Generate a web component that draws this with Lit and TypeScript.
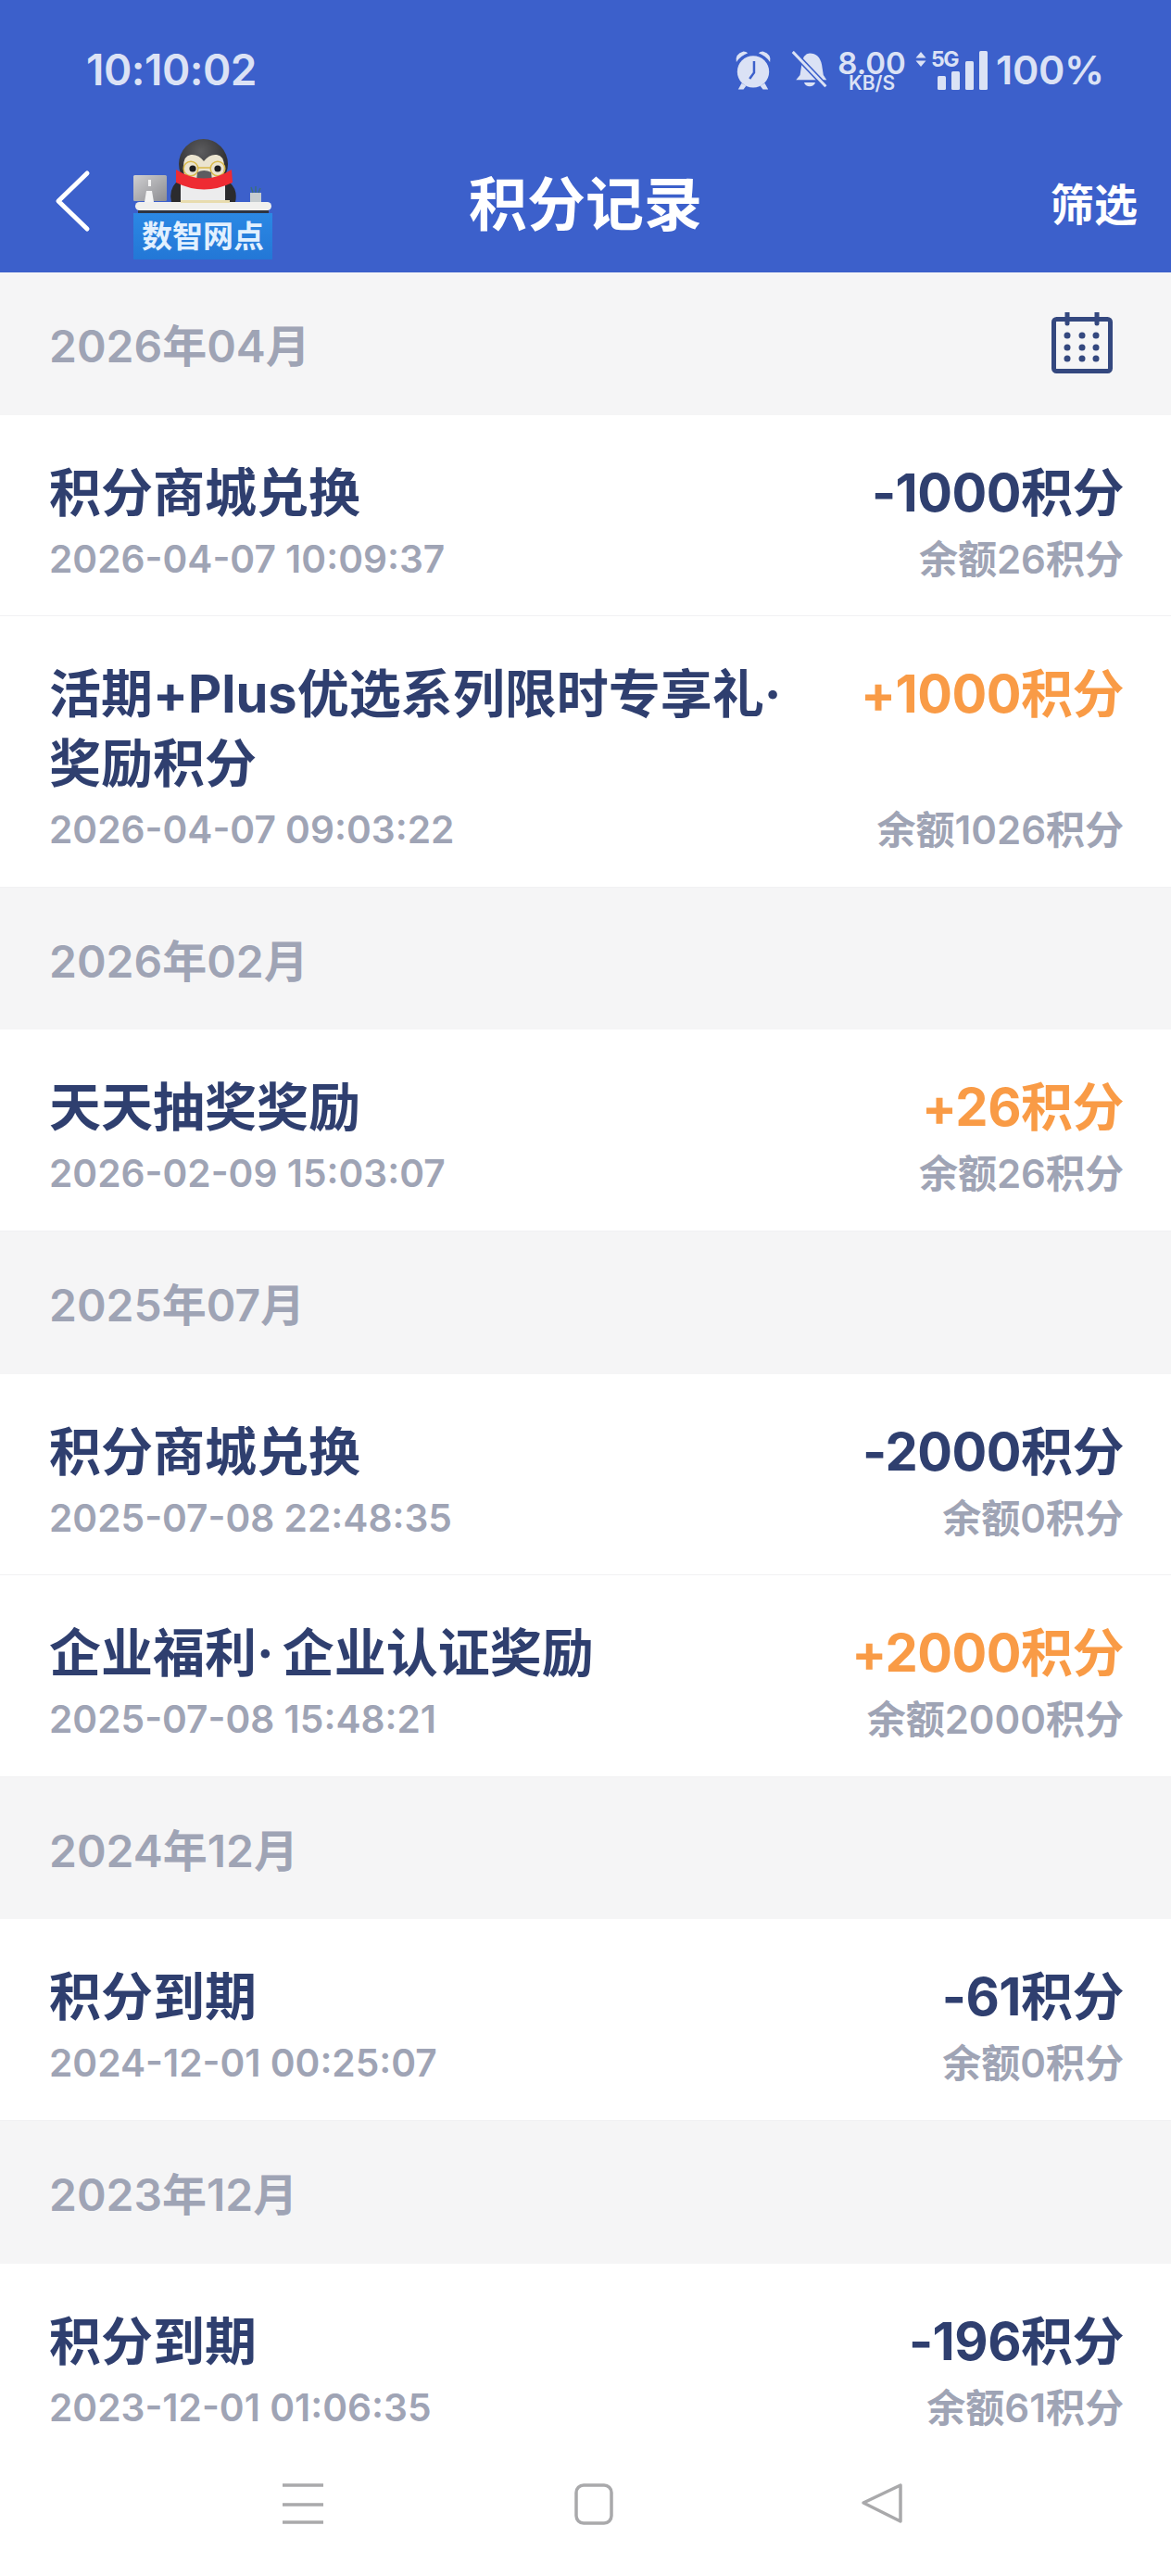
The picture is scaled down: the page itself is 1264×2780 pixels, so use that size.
import { LitElement, html, css, svg } from "lit";
import { customElement } from "lit/decorators.js";

type Row = { title: string; time: string; amount: string; balance: string; gain?: boolean };
type Section = { month: string; calendar?: boolean; rows: Row[] };

const sections: Section[] = [
  {
    month: "2026年04月",
    calendar: true,
    rows: [
      { title: "积分商城兑换", time: "2026-04-07 10:09:37", amount: "-1000积分", balance: "余额26积分" },
      { title: "活期+Plus优选系列限时专享礼·奖励积分", time: "2026-04-07 09:03:22", amount: "+1000积分", balance: "余额1026积分", gain: true },
    ],
  },
  {
    month: "2026年02月",
    rows: [{ title: "天天抽奖奖励", time: "2026-02-09 15:03:07", amount: "+26积分", balance: "余额26积分", gain: true }],
  },
  {
    month: "2025年07月",
    rows: [
      { title: "积分商城兑换", time: "2025-07-08 22:48:35", amount: "-2000积分", balance: "余额0积分" },
      { title: "企业福利·企业认证奖励", time: "2025-07-08 15:48:21", amount: "+2000积分", balance: "余额2000积分", gain: true },
    ],
  },
  {
    month: "2024年12月",
    rows: [{ title: "积分到期", time: "2024-12-01 00:25:07", amount: "-61积分", balance: "余额0积分" }],
  },
  {
    month: "2023年12月",
    rows: [{ title: "积分到期", time: "2023-12-01 01:06:35", amount: "-196积分", balance: "余额61积分" }],
  },
];

// penguin at the desk, coordinates are page pixels from the logo's top left corner
const logo = svg`
  <defs>
    <radialGradient id="head" cx="45%" cy="25%" r="75%">
      <stop offset="0" stop-color="#5c5c5e" /><stop offset="1" stop-color="#222225" />
    </radialGradient>
    <linearGradient id="screen" x1="0" y1="0" x2="1" y2="1">
      <stop offset="0" stop-color="#cfcfd1" /><stop offset="1" stop-color="#8d8d91" />
    </linearGradient>
    <linearGradient id="plate" x1="0" y1="0" x2="0" y2="1">
      <stop offset="0" stop-color="#2b88e4" /><stop offset="1" stop-color="#2377d6" />
    </linearGradient>
  </defs>
  <path d="M46 47 q-8 8 -5 21 h12 v-21z" fill="#2b2b2e" />
  <path d="M104 47 q9 8 6 21 h-12 v-21z" fill="#2b2b2e" />
  <path d="M51 46 h48 v22 h-48z" fill="#ececed" />
  <ellipse cx="75.5" cy="27" rx="26.5" ry="27" fill="url(#head)" />
  <path d="M54 30 q0 -12 8 -13 q8 -1 14 7 q6 -8 14 -7 q8 1 8 13 q0 8 -3 14 h-38 q-3 -6 -3 -14z" fill="#ebe4cf" />
  <circle cx="64" cy="32" r="3.6" fill="#1d1d20" />
  <circle cx="91" cy="32" r="3.6" fill="#1d1d20" />
  <circle cx="62" cy="32" r="7.8" fill="none" stroke="#d9b94a" stroke-width="1.5" />
  <circle cx="91" cy="32" r="7.8" fill="none" stroke="#d9b94a" stroke-width="1.5" />
  <path d="M70 31 h13" stroke="#d9b94a" stroke-width="1.5" />
  <path d="M69 36 q7 -4 15 0 l1 9 h-17z" fill="#5c5c60" />
  <path d="M46 33 Q76 52 106 33 L107 47 Q76 62 46 47z" fill="#ee2b33" />
  <rect x="0" y="39" width="36" height="28" rx="1.5" fill="url(#screen)" />
  <rect x="16" y="44" width="3" height="7" fill="#f4f4f4" />
  <path d="M14 56 h6 l2 12 h-10z" fill="#f4f4f4" />
  <path d="M126 58 h12 v10 q-6 2 -12 0z" fill="#c6cdd0" />
  <path d="M129 58 l-2 -6 M132 58 v-7 M135 58 l2 -5" stroke="#3d6f78" stroke-width="1.4" />
  <rect x="2" y="68" width="147" height="9" rx="4.5" fill="#f0f0ee" />
  <rect x="51" y="66" width="53" height="3" fill="#e8dcae" />
  <rect x="5" y="77" width="141" height="4" fill="#2e3442" />
  <rect x="0" y="80" width="150" height="50" fill="url(#plate)" />
  <text x="75" y="117" class="plate-text" text-anchor="middle">数智网点</text>
`;

@customElement("app-root")
export class AppRoot extends LitElement {
  static styles = css`
    :host {
      display: block;
      position: relative;
      width: 1264px;
      height: 2780px;
      background: #fff;
      font-family: Inter, "Noto Sans CJK SC", sans-serif;
      overflow: hidden;
    }
    .top {
      background: #3c60cb;
      height: 294px;
    }
    .status {
      height: 150px;
      display: flex;
      align-items: center;
      justify-content: space-between;
      padding: 0 72px 0 93px;
      color: #dbe2f5;
    }
    .clock {
      font-size: 46px;
      font-weight: 600;
      letter-spacing: -0.5px;
    }
    .tray {
      display: flex;
      align-items: center;
    }
    .tray svg {
      display: block;
      fill: #dbe2f5;
    }
    .mute {
      margin-left: 20px;
    }
    .speed {
      display: flex;
      flex-direction: column;
      align-items: center;
      width: 72px;
      margin: 5px 10px 0 11px;
    }
    .speed b {
      font-size: 33px;
      font-weight: 600;
      line-height: 24px;
    }
    .speed span {
      font-size: 21px;
      font-weight: 600;
      line-height: 20px;
    }
    .net {
      position: relative;
      width: 80px;
      height: 42px;
      margin: 2px 8px 0 0;
    }
    .net svg {
      position: absolute;
      inset: 0;
    }
    .net em {
      position: absolute;
      left: 18px;
      top: -4px;
      font-style: normal;
      font-size: 23px;
      font-weight: 700;
      letter-spacing: -1.5px;
      line-height: 26px;
    }
    .battery {
      font-size: 43px;
      font-weight: 600;
      letter-spacing: -0.3px;
    }
    .nav {
      height: 144px;
      display: grid;
      grid-template-columns: 1fr auto 1fr;
      align-items: center;
      color: #fff;
    }
    .brand {
      align-self: start;
      display: flex;
      padding-left: 59px;
    }
    .back {
      display: block;
      flex: none;
      width: 40px;
      height: 76px;
      margin-top: 29px;
      fill: none;
      stroke: #fff;
      stroke-width: 5;
      stroke-linecap: round;
      stroke-linejoin: round;
    }
    .logo {
      display: block;
      flex: none;
      width: 150px;
      height: 130px;
      margin-left: 45px;
      overflow: visible;
    }
    .plate-text {
      font-family: "Noto Sans CJK SC", sans-serif;
      font-size: 33px;
      font-weight: 700;
      fill: #e2f0fe;
    }
    .heading {
      font-size: 63px;
      font-weight: 700;
      margin-bottom: 14px;
    }
    .filter {
      justify-self: end;
      padding-right: 36px;
      margin-bottom: 10px;
      font-size: 47px;
      font-weight: 600;
    }
    .month {
      box-sizing: border-box;
      height: 153.5px;
      background: #f5f5f6;
      display: flex;
      align-items: center;
      justify-content: space-between;
      padding: 0 63px 2px 53px;
      color: #9fa4b5;
      font-size: 48px;
      font-weight: 600;
    }
    .month svg {
      display: block;
      width: 66px;
      height: 66px;
    }
    .row {
      display: grid;
      grid-template-columns: 1fr auto;
      column-gap: 40px;
      padding: 47px 51px 35.7px 53px;
      border-bottom: 1px solid #f1f1f3;
    }
    .row:last-child {
      border-bottom-color: transparent;
    }
    .title,
    .amount {
      font-size: 56px;
      font-weight: 700;
      line-height: 75px;
      color: #2f3f6f;
    }
    .title {
      max-width: 830px;
    }
    .dot {
      padding-right: 9px;
    }
    .amount {
      text-align: right;
      white-space: nowrap;
      letter-spacing: -0.5px;
    }
    .gain {
      color: #f99b46;
    }
    .time,
    .balance {
      margin-top: 9px;
      font-weight: 600;
      line-height: 50px;
      color: #9fa4b5;
      white-space: nowrap;
    }
    .time {
      font-size: 40.7px;
    }
    .balance {
      font-size: 42px;
      text-align: right;
    }
    .bar {
      position: absolute;
      left: 0;
      right: 0;
      top: 2640px;
      height: 140px;
      background: #fff;
    }
    .bar svg {
      position: absolute;
      top: 38px;
      width: 60px;
      height: 52px;
      fill: none;
      stroke: #a9a9ab;
      stroke-width: 3.5;
      stroke-linejoin: round;
    }
    .menu { left: 297px; }
    .home { left: 612px; }
    .tri { left: 922px; }
  `;

  renderStatus() {
    return html`
      <div class="status">
        <span class="clock">10:10:02</span>
        <div class="tray">
          <svg width="42" height="45" viewBox="0 0 44 46">
            <circle cx="22" cy="25" r="18" />
            <path d="M3 14 q-2 -9 8 -12 q3 0 5 2 q-8 3 -13 10z M41 14 q2 -9 -8 -12 q-3 0 -5 2 q8 3 13 10z" />
            <path d="M9 38 l-4 7 h6 l3 -4z M35 38 l4 7 h-6 l-3 -4z" />
            <path d="M23 13 v13 l-5 7" fill="none" stroke="#3c60cb" stroke-width="2.6" />
          </svg>
          <svg class="mute" width="40" height="40" viewBox="0 0 44 46">
            <path d="M22 3 q12 0 15 14 l2 13 l4 6 h-38 l5 -6 l2 -13 q2 -14 10 -14z" />
            <path d="M15 39 h14 q-2 5 -7 5 q-5 0 -7 -5z" />
            <path d="M1 1 L42 44" stroke="#3c60cb" stroke-width="7" />
            <path d="M1 1 L42 44" stroke="#dbe2f5" stroke-width="3.4" />
          </svg>
          <div class="speed"><b>8.00</b><span>KB/S</span></div>
          <div class="net">
            <svg width="80" height="42" viewBox="0 0 80 42">
              <path d="M7 1 l5.5 6.5 h-11z M7 17 l5.5 -6.5 h-11z" />
              <rect x="25" y="27" width="9" height="15" rx="1.5" />
              <rect x="40" y="22" width="9" height="20" rx="1.5" />
              <rect x="55" y="11" width="9" height="31" rx="1.5" />
              <rect x="70" y="0" width="9" height="42" rx="1.5" />
            </svg>
            <em>5G</em>
          </div>
          <span class="battery">100%</span>
        </div>
      </div>
    `;
  }

  renderTitle(title: string) {
    const [head, tail] = title.split("·");
    if (tail === undefined) return title;
    return html`${head}<span class="dot">·</span>${tail}`;
  }

  renderRow(r: Row) {
    return html`
      <div class="row">
        <div class="title">${this.renderTitle(r.title)}</div>
        <div class="amount ${r.gain ? "gain" : ""}">${r.amount}</div>
        <div class="time">${r.time}</div>
        <div class="balance">${r.balance}</div>
      </div>
    `;
  }

  render() {
    return html`
      <div class="top">
        ${this.renderStatus()}
        <div class="nav">
          <div class="brand">
            <svg class="back" viewBox="0 0 40 76"><path d="M35 8 L4 38 L35 68" /></svg>
            <svg class="logo" viewBox="0 0 150 130">${logo}</svg>
          </div>
          <div class="heading">积分记录</div>
          <div class="filter">筛选</div>
        </div>
      </div>
      ${sections.map(
        (s) => html`
          <div class="month">
            <span>${s.month}</span>
            ${s.calendar
              ? html`<svg viewBox="0 0 66 66">
                  <rect x="2.5" y="7.5" width="61" height="56" rx="3" fill="none" stroke="#34487f" stroke-width="5" />
                  <path d="M17 0 v12 M49 0 v12" stroke="#34487f" stroke-width="5" stroke-linecap="round" />
                  ${[25, 38, 50].map((y) =>
                    [17, 33, 48].map((x) => svg`<circle cx=${x} cy=${y} r="3.5" fill="#34487f" />`)
                  )}
                </svg>`
              : ""}
          </div>
          ${s.rows.map((r) => this.renderRow(r))}
        `
      )}
      <div class="bar">
        <svg class="menu" viewBox="0 0 60 52">
          <path d="M8 4 h44 M8 25 h44 M8 44 h44" />
        </svg>
        <svg class="home" viewBox="0 0 60 52">
          <rect x="10" y="4" width="38" height="41" rx="8" />
        </svg>
        <svg class="tri" viewBox="0 0 60 52">
          <path d="M50 4 V43 L10 23z" />
        </svg>
      </div>
    `;
  }
}
